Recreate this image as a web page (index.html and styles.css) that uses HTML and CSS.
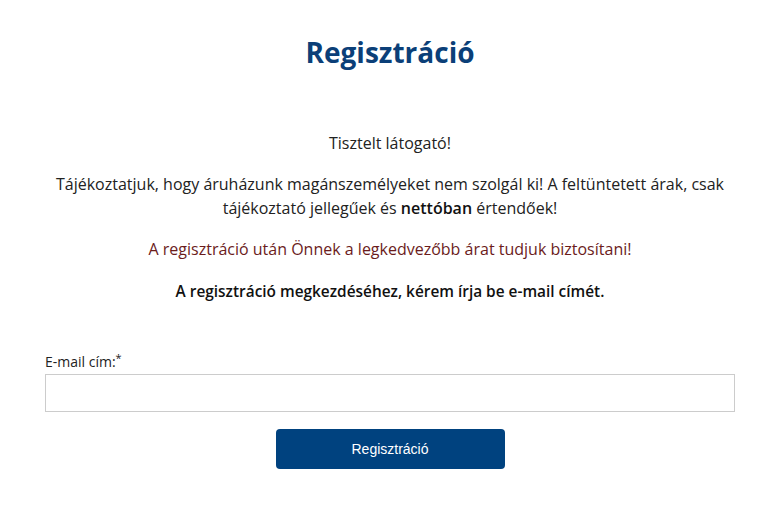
FILE: index.html
```html
<!DOCTYPE html>
<html lang="hu">
<head>
<meta charset="utf-8">
<link rel="stylesheet" href="styles.css">
</head>
<body>
<div class="page">
  <h1 class="title">Regisztráció</h1>
  <div class="intro">
    <p class="greet">Tisztelt látogató!</p>
    <p class="info">Tájékoztatjuk, hogy áruházunk magánszemélyeket nem szolgál ki! A feltüntetett árak, csak tájékoztató jellegűek és <strong>nettóban</strong> értendőek!</p>
    <p class="promo">A regisztráció után Önnek a legkedvezőbb árat tudjuk biztosítani!</p>
    <p class="cta">A regisztráció megkezdéséhez, kérem írja be e-mail címét.</p>
  </div>
  <form class="form">
    <label class="label" for="email">E-mail cím:<sup>*</sup></label>
    <input class="input" id="email" type="email">
    <div class="actions">
      <button class="btn" type="button">Regisztráció</button>
    </div>
  </form>
</div>
</body>
</html>
```
FILE: styles.css
```css
* { box-sizing: border-box; }
body {
  margin: 0;
  background: #fff;
  font-family: "Open Sans", "Liberation Sans", sans-serif;
  color: #222;
}
.page {
  padding: 32px 28px 0 45px;
}
.title {
  margin: 0;
  text-align: center;
  font-size: 28px;
  font-weight: 700;
  color: #0b3f78;
  line-height: 40px;
}
.intro {
  margin-top: 59px;
  text-align: center;
  font-size: 16px;
  line-height: 24px;
}
.intro p { margin: 0 0 17px; }
.greet { color: #222; }
.info { color: #222; }
.info strong { font-weight: 600; color: #111; }
.intro .promo { color: #6b1c1c; margin-bottom: 19px; }
.cta { font-weight: 600; color: #111; font-size: 15.4px; }
.form {
  margin-top: 49px;
}
.label {
  display: block;
  font-size: 14px;
  color: #222;
  line-height: 18px;
  margin-bottom: 3px;
}
.label sup { font-size: 11px; vertical-align: top; line-height: 10px; }
.input {
  display: block;
  width: 690px;
  height: 38px;
  border: 1px solid #ccc;
  background: #fff;
  padding: 0 10px;
  font-size: 14px;
}
.actions {
  display: flex;
  justify-content: center;
  width: 690px;
  margin-top: 17px;
}
.btn {
  width: 229px;
  height: 40px;
  border: 0;
  border-radius: 4px;
  background: #00427f;
  color: #fff;
  font-family: "Liberation Sans", Arial, sans-serif;
  font-size: 14px;
}
```
